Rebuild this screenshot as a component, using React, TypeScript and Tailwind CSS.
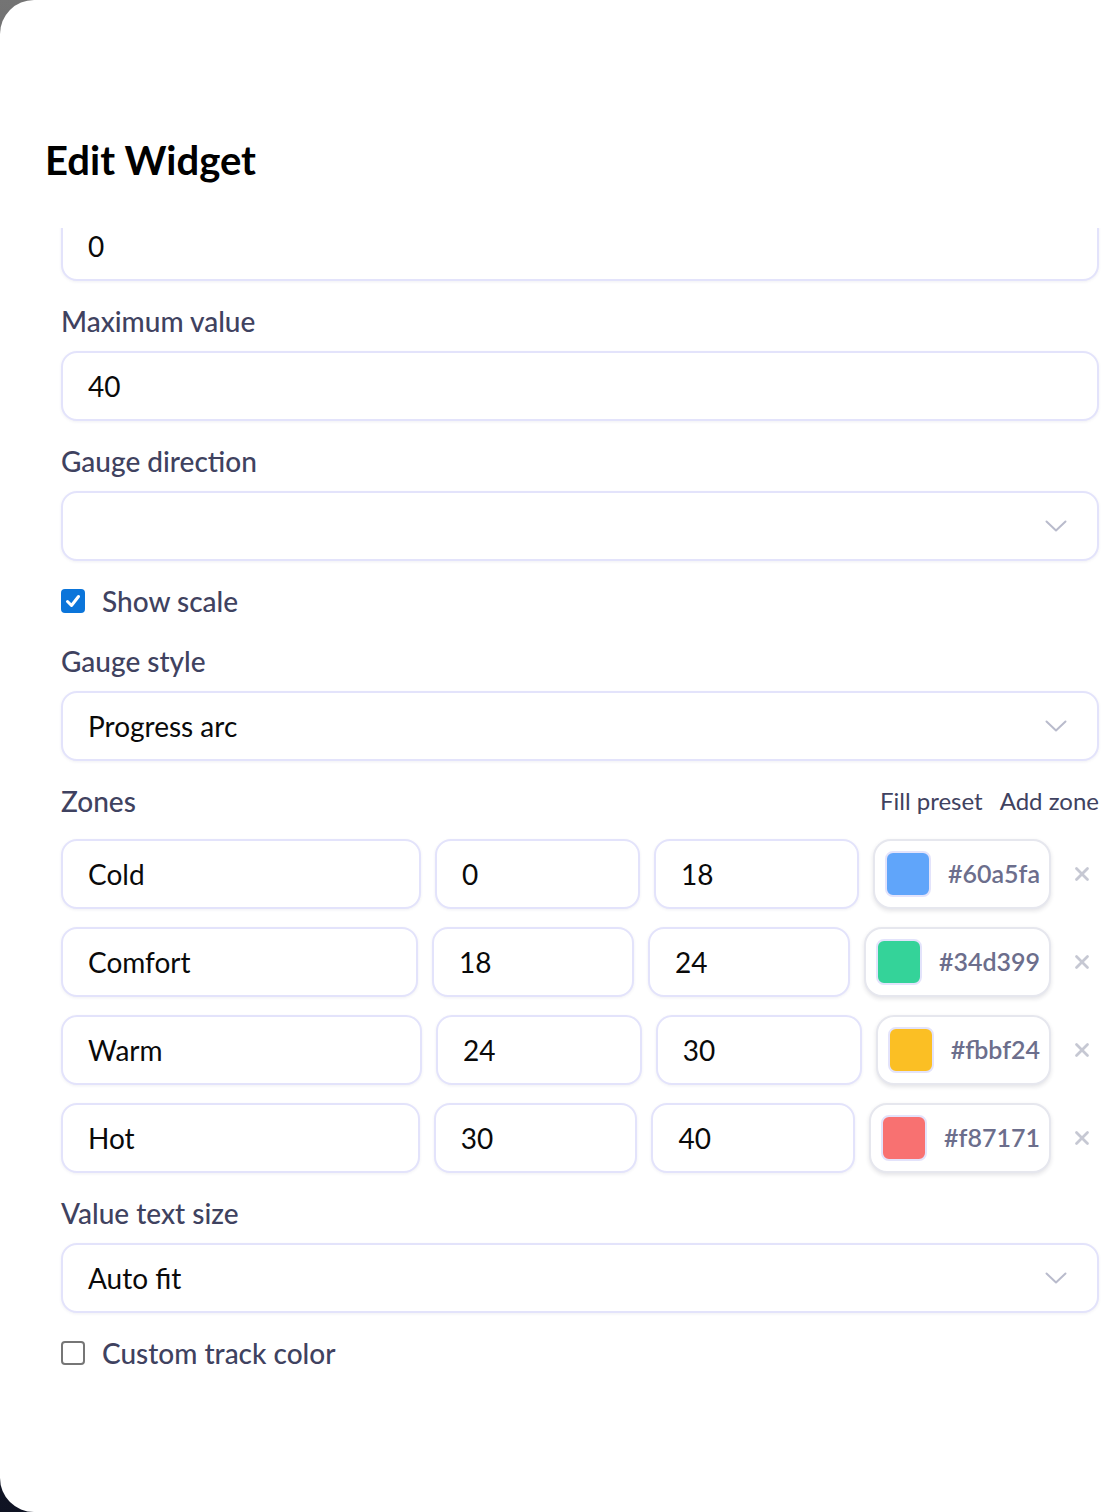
import { X } from 'lucide-react';

const font = { fontFamily: '"Lato", "Noto Sans", sans-serif' };

const Chevron = () => (
  <svg width="22" height="12" viewBox="0 0 22 12" fill="none" className="shrink-0">
    <path d="M1.5 1.5 11 10.5l9.5-9" stroke="#b9bbcc" strokeWidth="2" strokeLinecap="round" strokeLinejoin="round" />
  </svg>
);

const Label = ({ children, className = '' }: { children: React.ReactNode; className?: string }) => (
  <div className={`h-[30px] leading-[30px] text-[28px] font-medium text-[#3f4260] ${className}`}>{children}</div>
);

const Field = ({ value, className = '' }: { value: string; className?: string }) => (
  <div
    className={`h-[70px] flex items-center px-[25px] rounded-[16px] border-2 border-[#e3e3fb] bg-white shadow-[0_1px_3px_rgba(60,60,120,0.08)] text-[28px] text-[#0a0a0a] min-w-0 ${className}`}
  >
    {value}
  </div>
);

const Select = ({ value }: { value: string }) => (
  <div className="h-[70px] flex items-center justify-between pl-[25px] pr-[30px] rounded-[16px] border-2 border-[#e3e3fb] bg-white shadow-[0_1px_3px_rgba(60,60,120,0.08)] text-[28px] text-[#0a0a0a]">
    <span>{value}</span>
    <Chevron />
  </div>
);

const zones = [
  { name: 'Cold', min: '0', max: '18', color: '#60a5fa' },
  { name: 'Comfort', min: '18', max: '24', color: '#34d399' },
  { name: 'Warm', min: '24', max: '30', color: '#fbbf24' },
  { name: 'Hot', min: '30', max: '40', color: '#f87171' },
];

export default function App() {
  return (
    <div className="w-[1112px] h-[1512px] overflow-hidden bg-gradient-to-b from-[#747474] via-[#3a3d48] to-[#0f1323]" style={font}>
      <div className="w-[1180px] h-[1512px] rounded-[34px] bg-white overflow-hidden flex flex-col">
        {/* Header */}
        <div className="h-[228px] shrink-0 pl-[45px] pt-[136px]">
          <h2 className="text-[40px] leading-[48px] font-bold text-black">Edit Widget</h2>
        </div>

        {/* Scroll body */}
        <div className="flex-1 overflow-hidden">
          <div className="w-[1038px] ml-[61px] -mt-[17px] flex flex-col">
            <Field value="0" />

            <Label className="mt-[25px] mb-[15px]">Maximum value</Label>
            <Field value="40" />

            <Label className="mt-[25px] mb-[15px]">Gauge direction</Label>
            <Select value="" />

            <label className="mt-[25px] h-[30px] flex items-center gap-[17px]">
              <span className="w-[24px] h-[24px] rounded-[4px] bg-[#0b75da] flex items-center justify-center">
                <svg width="18" height="18" viewBox="0 0 18 18" fill="none">
                  <path d="M3.5 9.5 7.5 13.5 14.5 4.5" stroke="white" strokeWidth="3" strokeLinecap="round" strokeLinejoin="round" />
                </svg>
              </span>
              <span className="text-[28px] font-medium text-[#3f4260]">Show scale</span>
            </label>

            <Label className="mt-[30px] mb-[15px]">Gauge style</Label>
            <Select value="Progress arc" />

            <div className="mt-[25px] mb-[23px] h-[30px] flex items-center justify-between">
              <span className="text-[28px] font-medium text-[#3f4260]">Zones</span>
              <div className="flex items-center gap-[17px] text-[24px] text-[#3f4260]">
                <button>Fill preset</button>
                <button>Add zone</button>
              </div>
            </div>

            <div className="flex flex-col gap-[18px]">
              {zones.map((z) => (
                <div key={z.name} className="flex items-center gap-[14px]">
                  <Field value={z.name} className="grow shrink basis-[209px]" />
                  <Field value={z.min} className="grow shrink basis-0" />
                  <Field value={z.max} className="grow shrink basis-0" />
                  <div className="h-[70px] shrink-0 flex items-center pl-[10px] pr-[9px] gap-[17px] rounded-[18px] border-2 border-[#e6e7ee] bg-white shadow-[0_2px_4px_rgba(30,30,60,0.12)]">
                    <span
                      className="w-[46px] h-[46px] rounded-[8px] border-2 border-[#e3e3fb]"
                      style={{ backgroundColor: z.color }}
                    />
                    <span className="text-[25px] font-semibold text-[#6c6e8c]">{z.color}</span>
                  </div>
                  <button className="w-[34px] h-[34px] flex items-center justify-center text-[#c6c8d3]">
                    <X size={22} strokeWidth={3} />
                  </button>
                </div>
              ))}
            </div>

            <Label className="mt-[25px] mb-[15px]">Value text size</Label>
            <Select value="Auto fit" />

            <label className="mt-[25px] h-[30px] flex items-center gap-[17px]">
              <span className="w-[24px] h-[24px] rounded-[4px] border-2 border-[#767676] bg-white" />
              <span className="text-[28px] font-medium text-[#3f4260]">Custom track color</span>
            </label>
          </div>
        </div>
      </div>
    </div>
  );
}
